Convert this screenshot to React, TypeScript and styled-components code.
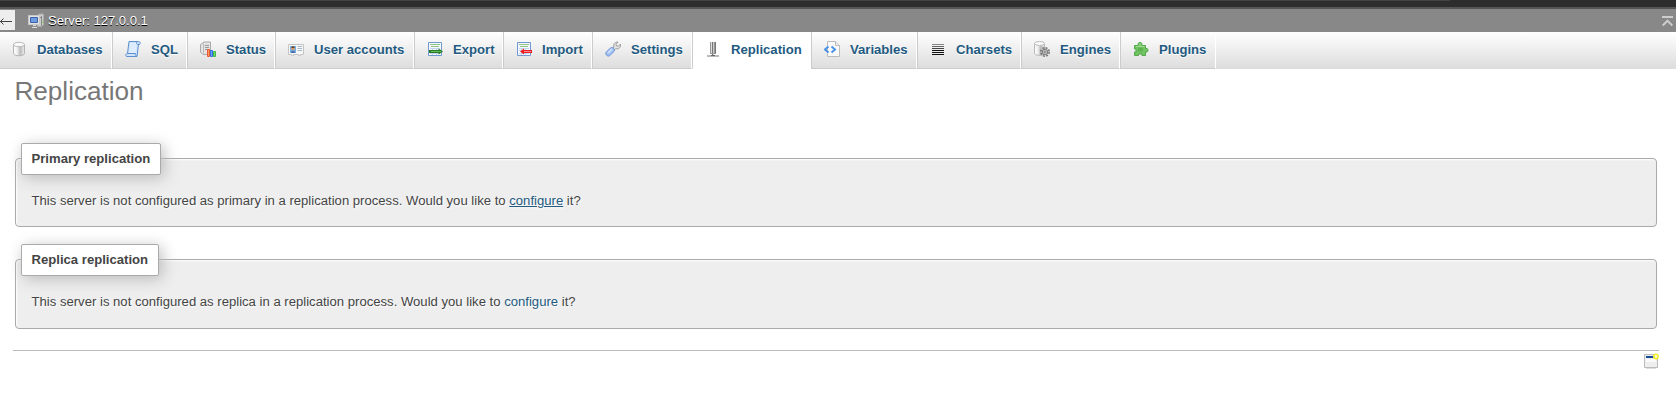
import React from 'react';
import styled, { createGlobalStyle, css } from 'styled-components';

const GlobalStyle = createGlobalStyle`
  * { box-sizing: border-box; }
  body {
    margin: 0;
    background: #fff;
    color: #444;
    font: 13.12px/16px "Liberation Sans", Arial, sans-serif;
  }
`;

const Page = styled.div`
  display: flex;
  flex-direction: column;
  height: 401px;
  overflow: hidden;
`;

const WindowEdge = styled.div`
  flex: none;
  height: 9px;
  background: #2d2d2d;
  border-bottom: 2px solid #555;
  &::before {
    content: '';
    display: block;
    width: 1450px;
    height: 1px;
    background: #444;
  }
`;

const ServerBar = styled.header`
  flex: none;
  display: flex;
  align-items: flex-start;
  height: 23px;
  background: #888;
`;

const CollapseButton = styled.button`
  width: 15px;
  height: 20px;
  margin: 1px 13px 0 0;
  padding: 0;
  border: 0;
  background: #eee;
  svg { display: block; }
`;

const ServerName = styled.a`
  flex: 1;
  display: flex;
  gap: 4px;
  padding-top: 4px;
  color: #fff;
  letter-spacing: -0.05px;
  text-shadow: 0 1px 0 #000;
`;

const TopButton = styled.span`
  padding: 7px 3px 0 0;
  svg { display: block; }
`;

const TabBar = styled.nav`
  flex: none;
  display: flex;
  height: 37px;
  background: linear-gradient(#fff, #dcdcdc);
`;

const Tab = styled.a<{ $width: number; $active?: boolean; $first?: boolean }>`
  flex: none;
  display: flex;
  gap: 10px;
  width: ${(p) => p.$width}px;
  padding: 9px 0 0 12px;
  border-left: 1px solid #ccc;
  border-right: 1px solid #fff;
  border-bottom: 1px solid #ccc;
  color: #235a81;
  font-weight: bold;
  line-height: 18px;
  white-space: nowrap;
  text-shadow: 0 1px 0 #fff;
  svg { flex: none; }
  ${(p) => p.$first && css`padding-left: 11px; border-left: 0;`}
  ${(p) => p.$active && css`background: #fff; border-bottom-color: #fff;`}
`;

const Content = styled.main`
  padding: 7px 17px 0 13px;
`;

const Title = styled.h2`
  margin: 0 0 52px 1.5px;
  color: #777;
  font-size: 26.1px;
  font-weight: normal;
  line-height: 30px;
`;

const Panel = styled.section<{ $height: number }>`
  height: ${(p) => p.$height}px;
  margin: 0 2px 32px;
  padding: 0 5px;
  border: 1px solid #aaa;
  border-radius: 4px;
  background: #eee;
  box-shadow: inset 1px 1px 2px #fff;
  text-shadow: 1px 1px 2px #fff;
`;

const Legend = styled.h3<{ $width: number }>`
  width: ${(p) => p.$width}px;
  height: 32px;
  margin: -16px 0 18px;
  padding: 7px 9.5px;
  border: 1px solid #aaa;
  border-radius: 2px;
  background: #fff;
  box-shadow: 3px 3px 15px #bbb;
  font-size: 13.12px;
  line-height: 16px;
  white-space: nowrap;
`;

const Message = styled.p`
  margin: 0 10.5px;
  white-space: nowrap;
`;

const Link = styled.a<{ $underlined?: boolean }>`
  color: #235a81;
  text-decoration: ${(p) => (p.$underlined ? 'underline' : 'none')};
`;

const Footer = styled.footer`
  display: flex;
  justify-content: flex-end;
  margin-top: -11px;
  padding: 2px 0 0;
  border-top: 1px solid #bbb;
`;

const Icon = ({ children }: { children: React.ReactNode }) => (
  <svg width="16" height="16" viewBox="0 0 16 16" fill="none">{children}</svg>
);

const ServerIcon = () => (
  <Icon>
    <path d="M9.500 2.500l2-1.500h4v11l-2 1.500h-4z" fill="#ccc" stroke="#aaa" />
    <path d="M13.500 3v10M10 4.500h3" stroke="#888" />
    <path d="M14 8h1v2h-1z" fill="#8ddc6c" />
    <path d="M.5 2.500h11v9H.5z" fill="#e2e2e2" stroke="#c8c8c8" />
    <path d="M2.500 4.500h7v5h-7z" fill="#6f9be0" stroke="#3c62a5" />
    <path d="M5 12.500h3M4 14.500h5" stroke="#ddd" />
  </Icon>
);

const DatabaseIcon = () => (
  <Icon>
    <defs>
      <linearGradient id="metal">
        <stop stopColor="#fff" /><stop offset=".35" stopColor="#eee" />
        <stop offset=".6" stopColor="#bbb" /><stop offset="1" stopColor="#eee" />
      </linearGradient>
    </defs>
    <path d="M2.500 3.500v9c0 3 11 3 11 0v-9z" fill="url(#metal)" stroke="#b5b5b5" />
    <ellipse cx="8" cy="3.500" rx="5.500" ry="2.200" fill="#fafafa" stroke="#bbb" />
  </Icon>
);

const SqlIcon = () => (
  <Icon>
    <path d="M4 .5h9.500c2.200 0 2.200 3 0 3L12 15.500H1.500c-1.500-1.500-.5-3 1-3z" fill="#cfe4fb" stroke="#5d90cc" />
    <path d="M5.500 2h6.500l-1.500 10H4z" fill="#deedfd" />
    <path d="M12 1c-.7.800-.7 1.800.5 2.500h2M2.500 12.500h8c-.3 1.300.2 2.300 1.500 3" stroke="#5d90cc" />
  </Icon>
);

const StatusIcon = () => (
  <Icon>
    <path d="M.5 3.500l3.500-2.500h6.500v11l-2 1.500H3L.5 11z" fill="#e3e3e3" stroke="#aaa" />
    <path d="M3.500 2.500v10" stroke="#bbb" />
    <path d="M5 4.500h4M5 6.500h4M5 8.500h4" stroke="#999" />
    <path d="M7.500 8.500h2v7h-2z" fill="#ff9a5c" stroke="#ee5a35" />
    <path d="M10.500 9.500h2v6h-2z" fill="#6aa5ff" stroke="#2f6fe0" />
    <path d="M13.500 10.500h2v5h-2z" fill="#74d66b" stroke="#3fb849" />
  </Icon>
);

const UsersIcon = () => (
  <Icon>
    <path d="M.5 3.500h15v10h-3v1h-2v-1h-5v1h-2v-1h-3z" fill="#f6f6f6" stroke="#c4c4c4" />
    <path d="M2 5h6v7H2z" fill="#75aee5" />
    <circle cx="5" cy="7.500" r="1.800" fill="#d79b69" />
    <path d="M3.300 7c0-2.200 3.400-2.200 3.400 0z" fill="#69452f" />
    <path d="M3 12c0-3 4-3 4 0z" fill="#476fa7" />
    <path d="M9.500 5.500h4.500M9.500 7.500h4.500M9.500 9.500h4.500" stroke="#a8b9cd" />
  </Icon>
);

const Sheet = () => (
  <>
    <path d="M1.500 1.500h13v13h-13z" fill="#f4f9ff" stroke="#7198d0" />
    <path d="M3 3.500h10M4 5.500h8" stroke="#8fc483" />
    <path d="M3 7.500h10M3 9.500h10M3 12.500h10M5.500 7v7M9.500 7v7" stroke="#c3d3ec" />
  </>
);

const ExportIcon = () => (
  <Icon><Sheet /><path d="M2 9h9.500V7.500l4.500 3-4.500 3V12H2z" fill="#287c26" /><path d="M4 10.500h10" stroke="#67bd55" /></Icon>
);

const ImportIcon = () => (
  <Icon><Sheet /><path d="M16 9H8V7.500l-4 3 4 3V12h8z" fill="#ee1c23" /><path d="M8 10.500h7" stroke="#ff8b8b" /></Icon>
);

const SettingsIcon = () => (
  <Icon>
    <path d="M8 7l1-1c-1-2.500.5-5 4-5l-2 2.500.7 1.500 1.800.2L15.500 3c.7 3.500-2 5.500-4.700 4.700L9.500 9z" fill="#e4e4e4" stroke="#999" />
    <path d="M1.200 11.200l4.500-4.500c2-1 4.500 1.500 3.500 3.500l-4.500 4.500c-2 1.500-5-1.500-3.500-3.500z" fill="#a3c1f4" stroke="#6c93d5" />
    <path d="M3 12l4-4" stroke="#d3e3ff" strokeWidth="1.500" />
  </Icon>
);

const ReplicationIcon = () => (
  <Icon>
    <path d="M5.500 1v11" stroke="#999" /><path d="M6.500 1v11" stroke="#ddd" />
    <path d="M7.500 1v13" stroke="#777" /><path d="M8.500 1v13" stroke="#ccc" />
    <path d="M9.500 1v11" stroke="#999" /><path d="M10.500 1v11" stroke="#777" />
    <path d="M5 12.500h6" stroke="#999" />
    <path d="M2 14.500h12" stroke="#bbb" /><path d="M6 14.500h4" stroke="#666" />
    <path d="M2 15.500h12" stroke="#bbb" />
  </Icon>
);

const VariablesIcon = () => (
  <Icon>
    <path d="M3.500.5h8l4 4v11h-12z" fill="#fafafa" stroke="#bbb" />
    <path d="M11.500.5v4h4" stroke="#bbb" fill="#eee" />
    <path d="M4.500 5.500L1 8.500l3.500 3M7.500 5.500l3.500 3-3.500 3" stroke="#4d93e5" strokeWidth="2" />
  </Icon>
);

const CharsetsIcon = () => (
  <Icon>
    <path d="M2 3.500h12" stroke="#888" /><path d="M2 5.500h12" stroke="#666" />
    <path d="M2 7.500h12" stroke="#444" /><path d="M2 9.500h12M2 11.500h12M2 13.500h12" stroke="#111" />
  </Icon>
);

const EnginesIcon = () => (
  <Icon>
    <path d="M.5 2.500v10c0 2.500 10 2.500 10 0v-10z" fill="url(#metal)" stroke="#b8b8b8" />
    <ellipse cx="5.500" cy="2.500" rx="5" ry="2" fill="#fafafa" stroke="#bbb" />
    <circle cx="11" cy="11" r="4.200" stroke="#777" strokeWidth="1.600" strokeDasharray="2 1.300" />
    <circle cx="11" cy="11" r="2.800" fill="#ccc" stroke="#777" />
    <circle cx="11" cy="11" r="1" fill="#fff" stroke="#777" />
  </Icon>
);

const PluginsIcon = () => (
  <Icon>
    <path d="M1.500 4.500h3.700V2.500c0-1.300 3.600-1.300 3.600 0v2h3.700v3h1.500c1.300 0 1.300 3.500 0 3.500h-1.500v3.500H9V13H5.500v1.500h-4V11H3V8H1.500z" fill="#73c463" stroke="#55a84b" />
    <path d="M5 6.500h5v4H5z" fill="#5db350" />
    <path d="M3 5.500h8.500M7 2.500v2" stroke="#a3dd95" />
  </Icon>
);

const WindowIcon = () => (
  <svg width="16" height="16" viewBox="0 0 16 16" fill="none">
    <path d="M1.500 1.500h13v13h-13z" fill="#eee" stroke="#bbb" />
    <path d="M3 15.500h10" stroke="#ddd" />
    <path d="M3 3h8v2H3z" fill="#174a93" />
    <path d="M3 6h10v3H3z" fill="#fafafa" />
    <circle cx="13" cy="3.500" r="2.200" fill="#fffbd0" stroke="#f6ef24" strokeWidth="1.500" />
  </svg>
);

const tabs = [
  { label: 'Databases', width: 112, icon: <DatabaseIcon /> },
  { label: 'SQL', width: 75, icon: <SqlIcon /> },
  { label: 'Status', width: 88, icon: <StatusIcon /> },
  { label: 'User accounts', width: 139, icon: <UsersIcon /> },
  { label: 'Export', width: 89, icon: <ExportIcon /> },
  { label: 'Import', width: 89, icon: <ImportIcon /> },
  { label: 'Settings', width: 100, icon: <SettingsIcon /> },
  { label: 'Replication', width: 119, icon: <ReplicationIcon />, active: true },
  { label: 'Variables', width: 106, icon: <VariablesIcon /> },
  { label: 'Charsets', width: 104, icon: <CharsetsIcon /> },
  { label: 'Engines', width: 99, icon: <EnginesIcon /> },
  { label: 'Plugins', width: 96, icon: <PluginsIcon /> },
];

export default function App() {
  return (
    <Page>
      <GlobalStyle />
      <WindowEdge />
      <ServerBar>
        <CollapseButton aria-label="Hide panel">
          <svg width="15" height="20" fill="none" stroke="#444">
            <path d="M0 11.500h12M3.500 8.500l-3 3 3 3" />
          </svg>
        </CollapseButton>
        <ServerName><ServerIcon />Server: 127.0.0.1</ServerName>
        <TopButton>
          <svg width="11" height="11" fill="none" stroke="#ccc" strokeWidth="2">
            <path d="M0 1h11M.7 9.500l4.800-4.800 4.800 4.800" />
          </svg>
        </TopButton>
      </ServerBar>
      <TabBar>
        {tabs.map((t, i) => (
          <Tab key={t.label} $width={t.width} $active={t.active} $first={i === 0}>
            {t.icon}{t.label}
          </Tab>
        ))}
      </TabBar>
      <Content>
        <Title>Replication</Title>
        <Panel $height={69}>
          <Legend $width={140}>Primary replication</Legend>
          <Message>
            This server is not configured as primary in a replication process. Would you like to{' '}
            <Link $underlined>configure</Link> it?
          </Message>
        </Panel>
        <Panel $height={70}>
          <Legend $width={138}>Replica replication</Legend>
          <Message>
            This server is not configured as replica in a replication process. Would you like to{' '}
            <Link>configure</Link> it?
          </Message>
        </Panel>
        <Footer><WindowIcon /></Footer>
      </Content>
    </Page>
  );
}
